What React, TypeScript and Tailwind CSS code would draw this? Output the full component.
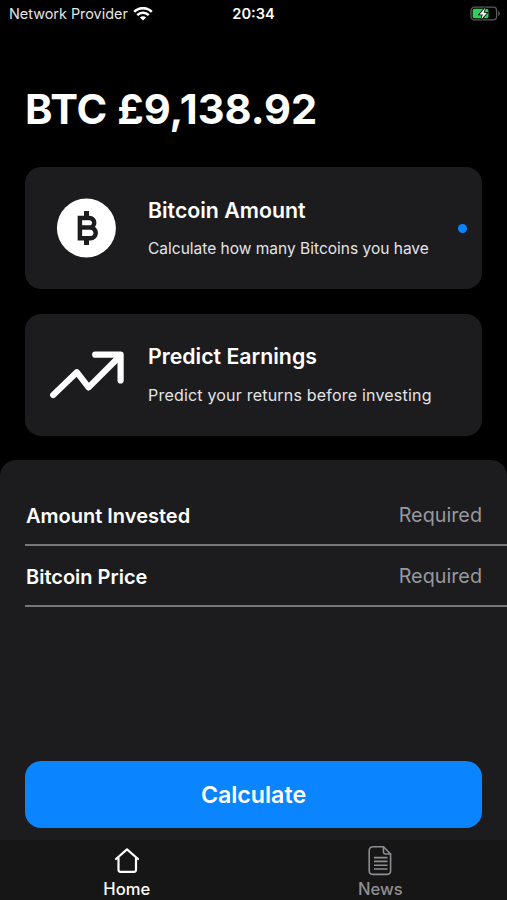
import type { ReactNode } from "react";

const WifiIcon = () => (
    <svg width="20" height="14" viewBox="0 0 20 14" fill="none" stroke="#fff" strokeWidth="2.5">
        <path d="M1.2 4.8 A12.6 12.6 0 0 1 18.8 4.8" />
        <path d="M4.2 8.1 A8.4 8.4 0 0 1 15.8 8.1" />
        <path d="M10 13.6 L6.9 10.6 A4.6 4.6 0 0 1 13.1 10.6 Z" fill="#fff" stroke="none" />
    </svg>
);

const BatteryIcon = () => (
    <svg width="31" height="16" viewBox="0 0 31 16" fill="none">
        <rect x="1" y="1.1" width="25.6" height="12.8" rx="3.4" stroke="#5a5a5c" strokeWidth="1.3" />
        <path d="M28.2 5.1 C30.4 5.9 30.4 9.1 28.2 9.9 Z" fill="#5a5a5c" />
        <rect x="2.7" y="2.8" width="15.8" height="9.4" rx="2" fill="#30d158" />
        <path d="M15.2 1.8 L9.4 8.4 H12.8 L11.2 13.4 L17 6.8 H13.7 Z" fill="#fff" stroke="#000" strokeWidth="1.6" paintOrder="stroke" />
    </svg>
);

const BitcoinIcon = () => (
    <svg className="mr-px" width="60" height="60" viewBox="0 0 60 60" fill="none">
        <circle cx="30.4" cy="30" r="29.5" fill="#fff" />
        <g stroke="#1c1c1e" strokeWidth="4.5">
            <path d="M23.9 20 H33.4 A4.7 4.7 0 0 1 33.4 29.6 H23.9 M33.4 29.6 H34.4 A5.2 5.2 0 0 1 34.4 40.2 H23.9 M23.9 17.8 V42.4" />
            <path d="M30.5 13 V18 M30.5 42 V47" strokeWidth="5" />
        </g>
    </svg>
);

const TrendIcon = () => (
    <svg width="76" height="50" viewBox="0 0 76 50" fill="none" stroke="#fff" strokeWidth="6.2" strokeLinecap="round" strokeLinejoin="round">
        <path d="M4.2 45 L27.8 22.2 L39.6 37.4 L71 6" />
        <path d="M46.2 4.7 H71.6 V30.4" />
    </svg>
);

const HomeIcon = () => (
    <svg width="28" height="28" viewBox="0 0 28 28" fill="none" stroke="#fff" strokeWidth="2.2" strokeLinecap="round" strokeLinejoin="round">
        <path d="M3 13 L14 3.4 L25 13" />
        <path d="M5.5 12.4 V23.8 Q5.5 25.8 7.5 25.8 H21 Q23 25.8 23 23.8 V12.4" />
    </svg>
);

const NewsIcon = () => (
    <svg width="24" height="31" viewBox="0 0 24 31" fill="none" stroke="#8e8e93" strokeWidth="1.6" strokeLinejoin="round">
        <path d="M5 1.8 H15.5 L22.6 9 V25.4 Q22.6 29.4 18.6 29.4 H5.2 Q1.2 29.4 1.2 25.4 V5.8 Q1.2 1.8 5.2 1.8 Z" />
        <path d="M15.5 1.8 V7 Q15.5 9 17.5 9 H22.6" />
        <path d="M6 12.6 H19.5 M6 16.4 H19.5 M6 20.2 H19.5 M6 24 H19.5" />
    </svg>
);

type CardProps = { icon: ReactNode; title: string; text: ReactNode; selected?: boolean };

const Card = ({ icon, title, text, selected }: CardProps) => (
    <div className="flex h-[122px] items-center rounded-2xl bg-[#1c1c1e] pr-[15px]">
        <div className="flex w-[123px] shrink-0 justify-center">{icon}</div>
        <div className="flex-1 whitespace-nowrap">
            <h2 className="text-[21.3px] leading-7 font-semibold">{title}</h2>
            <p className="mt-[13px] text-[15.5px] leading-6 text-[#e4e4e6]">{text}</p>
        </div>
        {selected && <span className="size-[9px] rounded-full bg-[#0a84ff]" />}
    </div>
);

const Field = ({ label }: { label: string }) => (
    <label className="ml-[25px] flex h-[61px] items-center justify-between border-b-2 border-[#77777a] pr-[25px] pl-px">
        <span className="pt-0.5 text-[20px] font-semibold">{label}</span>
        <span className="text-[19.8px] leading-[30px] text-[#98989f]">Required</span>
    </label>
);

const App = () => {
    return (
        <div className="flex h-[900px] w-[507px] flex-col overflow-hidden bg-black font-['Inter','Liberation_Sans',sans-serif] text-white">
            <header className="grid h-7 grid-cols-3 items-center pr-[6px] pl-[9px]">
                <div className="flex items-center gap-[5px] text-[14.4px] whitespace-nowrap text-[#e4e4e6]">
                    Network Provider
                    <WifiIcon />
                </div>
                <div className="pt-px pr-[3px] text-center text-[14.6px] font-semibold">20:34</div>
                <div className="flex justify-end">
                    <BatteryIcon />
                </div>
            </header>

            <h1 className="mt-[56px] ml-[25px] h-[50px] text-[41.6px] leading-[50px] font-bold">BTC £9,138.92</h1>

            <div className="mx-[25px] mt-[33px] flex flex-col gap-[25px]">
                <Card icon={<BitcoinIcon />} title="Bitcoin Amount" text="Calculate how many Bitcoins you have" selected />
                <Card icon={<TrendIcon />} title="Predict Earnings" text={<span className="block pb-0.5 text-[16px] tracking-[0.2px]">Predict your returns before investing</span>} />
            </div>

            <section className="mt-6 flex flex-1 flex-col rounded-t-2xl bg-[#1c1c1e] pt-[25px]">
                <Field label="Amount Invested" />
                <Field label="Bitcoin Price" />
                <button className="mx-[25px] mt-auto mb-3 h-[67px] rounded-2xl bg-[#0a84ff] pt-px text-[23.2px] font-semibold">Calculate</button>
            </section>

            <nav className="grid h-[60px] grid-cols-2 bg-[#161616] text-[16.6px] leading-5 font-medium">
                <div className="flex flex-col items-center">
                    <div className="flex h-[39px] items-center"><HomeIcon /></div>
                    Home
                </div>
                <div className="flex flex-col items-center text-[#8e8e93]">
                    <div className="flex h-[39px] items-center pt-px"><NewsIcon /></div>
                    News
                </div>
            </nav>
        </div>
    );
};

export default App;
